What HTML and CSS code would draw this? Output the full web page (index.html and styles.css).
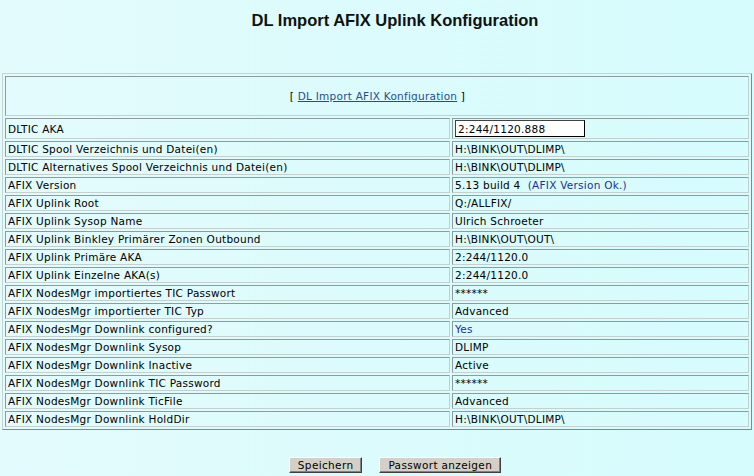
FILE: index.html
```html
<!DOCTYPE html>
<html>
<head>
<meta charset="utf-8">
<link rel="stylesheet" href="styles.css">
</head>
<body>
<div class="page">
  <h1 class="title">DL Import AFIX Uplink Konfiguration</h1>
  <table class="cfg">
    <tr><td class="head" colspan="2"><br>[ <a href="#" class="link">DL Import AFIX Konfiguration</a> ]<br>&nbsp;</td></tr>
    <tr class="aka"><td class="lbl">DLTIC AKA</td><td class="val"><input class="field" type="text" value="2:244/1120.888"></td></tr>
    <tr><td class="lbl">DLTIC Spool Verzeichnis und Datei(en)</td><td class="val">H:\BINK\OUT\DLIMP\</td></tr>
    <tr><td class="lbl">DLTIC Alternatives Spool Verzeichnis und Datei(en)</td><td class="val">H:\BINK\OUT\DLIMP\</td></tr>
    <tr><td class="lbl">AFIX Version</td><td class="val">5.13 build 4&nbsp; <span class="ok">(AFIX Version Ok.)</span></td></tr>
    <tr><td class="lbl">AFIX Uplink Root</td><td class="val">Q:/ALLFIX/</td></tr>
    <tr><td class="lbl">AFIX Uplink Sysop Name</td><td class="val">Ulrich Schroeter</td></tr>
    <tr><td class="lbl">AFIX Uplink Binkley Primärer Zonen Outbound</td><td class="val">H:\BINK\OUT\OUT\</td></tr>
    <tr><td class="lbl">AFIX Uplink Primäre AKA</td><td class="val">2:244/1120.0</td></tr>
    <tr><td class="lbl">AFIX Uplink Einzelne AKA(s)</td><td class="val">2:244/1120.0</td></tr>
    <tr><td class="lbl">AFIX NodesMgr importiertes TIC Passwort</td><td class="val">******</td></tr>
    <tr><td class="lbl">AFIX NodesMgr importierter TIC Typ</td><td class="val">Advanced</td></tr>
    <tr><td class="lbl">AFIX NodesMgr Downlink configured?</td><td class="val"><span class="ok">Yes</span></td></tr>
    <tr><td class="lbl">AFIX NodesMgr Downlink Sysop</td><td class="val">DLIMP</td></tr>
    <tr><td class="lbl">AFIX NodesMgr Downlink Inactive</td><td class="val">Active</td></tr>
    <tr><td class="lbl">AFIX NodesMgr Downlink TIC Password</td><td class="val">******</td></tr>
    <tr><td class="lbl">AFIX NodesMgr Downlink TicFile</td><td class="val">Advanced</td></tr>
    <tr><td class="lbl">AFIX NodesMgr Downlink HoldDir</td><td class="val">H:\BINK\OUT\DLIMP\</td></tr>
  </table>
  <div class="actions">
    <button class="btn" type="button">Speichern</button>
    <button class="btn" type="button">Passwort anzeigen</button>
  </div>
</div>
</body>
</html>
```
FILE: styles.css
```css
html, body {
  margin: 0;
  padding: 0;
  height: 100%;
}
body {
  background: linear-gradient(to right, #e4fbfc 0%, #dcfbfc 50%, #d6fcfd 100%);
  font-family: "DejaVu Sans", Verdana, sans-serif;
  font-size: 10.5px;
  color: #000;
}
.page {
  padding: 0 2px;
}
.title {
  margin: 0;
  padding: 11px 0 0 36px;
  height: 73px;
  box-sizing: border-box;
  text-align: center;
  font-family: "Liberation Sans", Arial, sans-serif;
  font-size: 16.5px;
  font-weight: bold;
  color: #111;
}
.cfg {
  width: 750px;
  border-collapse: separate;
  border-spacing: 2px;
  border: 1px solid;
  border-color: #c8d4d4 #7c8c8c #7c8c8c #c8d4d4;
}
.cfg td {
  padding: 1px 1px 1px 2px;
  line-height: 12px;
  border: 1px solid;
  border-color: #8c9c9c #c4d0d0 #c4d0d0 #8c9c9c;
  white-space: nowrap;
  letter-spacing: 0.25px;
}
.cfg td.head {
  text-align: center;
}
.cfg td.lbl {
  width: 440px;
}
.link {
  color: #1f4f8f;
  text-decoration: underline;
}
.ok {
  color: #1c2f9c;
}
.aka td {
  padding-top: 1px;
  padding-bottom: 1px;
}
.field {
  display: block;
  width: 130px;
  height: 17px;
  box-sizing: border-box;
  margin: 0;
  padding: 0 2px;
  border: 1px solid #000;
  border-top-color: #404040;
  border-left-color: #404040;
  background: #fff;
  font-family: "DejaVu Sans", Verdana, sans-serif;
  font-size: 10.5px;
  letter-spacing: 0.25px;
  color: #000;
}
.actions {
  padding: 27px 0 0 36px;
  display: flex;
  justify-content: center;
  gap: 17px;
}
.btn {
  margin: 0;
  height: 16px;
  padding: 0 8px;
  background: #d4d0c8;
  border: 1px solid;
  border-color: #ffffff #404040 #404040 #ffffff;
  box-shadow: inset -1px -1px 0 #808080;
  font-family: "DejaVu Sans", Verdana, sans-serif;
  font-size: 10.5px;
  letter-spacing: 0.35px;
  line-height: 12px;
  color: #000;
}
```
